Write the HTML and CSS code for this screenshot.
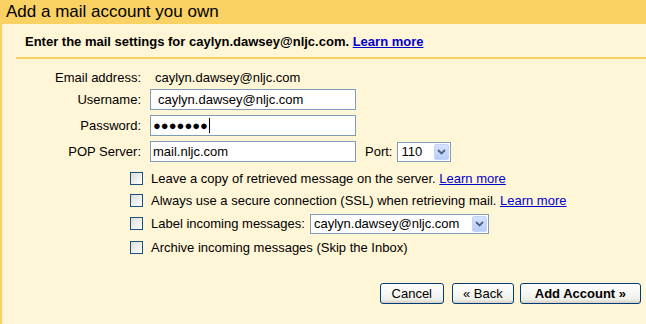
FILE: index.html
```html
<!DOCTYPE html>
<html>
<head>
<meta charset="utf-8">
<link rel="stylesheet" href="styles.css">
</head>
<body>
<div class="panel">
  <div class="title">Add a mail account you own</div>
  <div class="sub">Enter the mail settings for caylyn.dawsey@nljc.com. <a href="#">Learn more</a></div>
  <div class="form">
    <div class="label email-label">Email address:</div>
    <div class="value">caylyn.dawsey@nljc.com</div>
    <div class="label">Username:</div>
    <div class="field"><input class="text user" type="text" value="caylyn.dawsey@nljc.com"></div>
    <div class="label">Password:</div>
    <div class="field"><span class="text pw">&#9679;&#9679;&#9679;&#9679;&#9679;&#9679;&#9679;<span class="caret"></span></span></div>
    <div class="label">POP Server:</div>
    <div class="field">
      <input class="text" type="text" value="mail.nljc.com">
      <span class="port-label">Port:</span>
      <span class="select port"><span class="sel-text">110</span><span class="arrow"><svg width="9" height="6" viewBox="0 0 9 6"><path d="M1 1 L4.5 4.5 L8 1" fill="none" stroke="#4d6185" stroke-width="1.8"/></svg></span></span>
    </div>
  </div>
  <div class="checks">
    <div class="row"><span class="cb"></span><span>Leave a copy of retrieved message on the server. <a href="#">Learn more</a></span></div>
    <div class="row"><span class="cb"></span><span>Always use a secure connection (SSL) when retrieving mail. <a href="#">Learn more</a></span></div>
    <div class="row tall"><span class="cb"></span><span>Label incoming messages:</span><span class="select label-sel"><span class="sel-text">caylyn.dawsey@nljc.com</span><span class="arrow"><svg width="9" height="6" viewBox="0 0 9 6"><path d="M1 1 L4.5 4.5 L8 1" fill="none" stroke="#4d6185" stroke-width="1.8"/></svg></span></span></div>
    <div class="row"><span class="cb"></span><span>Archive incoming messages (Skip the Inbox)</span></div>
  </div>
  <div class="buttons">
    <button class="btn cancel">Cancel</button>
    <button class="btn back">&laquo; Back</button>
    <button class="btn primary">Add Account &raquo;</button>
  </div>
</div>
</body>
</html>
```

FILE: styles.css
```css
html, body {
  margin: 0;
  padding: 0;
}
body {
  font-family: "Liberation Sans", Arial, sans-serif;
  font-size: 13px;
  color: #000;
  background: #fff5d7;
}
.panel {
  border-left: 2px solid #fad163;
  background: #fff5d7;
  height: 324px;
  box-sizing: border-box;
}
.title {
  background: #fad163;
  height: 24px;
  line-height: 24px;
  font-size: 17px;
  padding-left: 4px;
}
.sub {
  margin-left: 14px;
  border-bottom: 2px solid #fad163;
  font-weight: bold;
  line-height: 16px;
  padding: 10px 0 7px 9px;
}
a {
  color: #0000cc;
  text-decoration: underline;
}
.form {
  display: grid;
  grid-template-columns: 139px auto;
  column-gap: 9px;
  row-gap: 5px;
  padding-top: 11px;
  align-items: center;
}
.label {
  text-align: right;
  line-height: 16px;
}
.email-label {
  margin-bottom: -2px;
}
.value {
  line-height: 16px;
  padding-left: 5px;
  margin-bottom: -2px;
}
.field {
  display: flex;
  align-items: center;
  height: 21px;
}
.text {
  box-sizing: border-box;
  width: 206px;
  height: 21px;
  border: 1px solid #7f9db9;
  background: #fff;
  font-family: "Liberation Sans", Arial, sans-serif;
  font-size: 13px;
  padding: 0 2px;
  margin: 0;
  outline: none;
  color: #000;
}
.text.user {
  padding-left: 7px;
}
.pw {
  display: flex;
  align-items: center;
  font-size: 13px;
  line-height: 13px;
}
.caret {
  display: inline-block;
  width: 1px;
  height: 15px;
  background: #000;
  margin-left: 1px;
}
.port-label {
  margin-left: 9px;
  margin-right: 5px;
}
.select {
  position: relative;
  display: inline-flex;
  align-items: center;
  box-sizing: border-box;
  height: 20px;
  border: 1px solid #7f9db9;
  background: #fff;
  padding-left: 3px;
}
.port {
  width: 54px;
}
.label-sel {
  width: 179px;
  margin-left: 5px;
}
.arrow {
  position: absolute;
  right: 1px;
  top: 1px;
  width: 15px;
  height: 16px;
  box-sizing: border-box;
  border: 1px solid #c3d3fd;
  border-radius: 2px;
  background: linear-gradient(#d6e2fd, #b9cdf7);
  display: flex;
  align-items: center;
  justify-content: center;
}
.checks {
  margin-top: 5px;
  padding-left: 128px;
}
.row {
  display: flex;
  align-items: center;
  height: 22px;
}
.row.tall {
  height: 25px;
}
.cb {
  display: inline-block;
  box-sizing: border-box;
  width: 13px;
  height: 13px;
  border: 1px solid #1c5180;
  background: linear-gradient(135deg, #dcdcd7, #ffffff);
  margin-right: 8px;
  flex: none;
}
.buttons {
  display: flex;
  justify-content: flex-end;
  margin-top: 25px;
  padding-right: 5px;
}
.btn {
  height: 21px;
  box-sizing: border-box;
  border: 1px solid #003c74;
  border-radius: 3px;
  background: linear-gradient(#ffffff, #f0f0ea 80%, #d6d0c5);
  font-family: "Liberation Sans", Arial, sans-serif;
  font-size: 13px;
  color: #000;
  padding: 0 10px;
  margin: 0;
}
.cancel {
  padding: 0 11px;
  margin-right: 8px;
}
.back {
  margin-right: 6px;
}
.primary {
  font-weight: bold;
  padding: 0 14px;
}
```
